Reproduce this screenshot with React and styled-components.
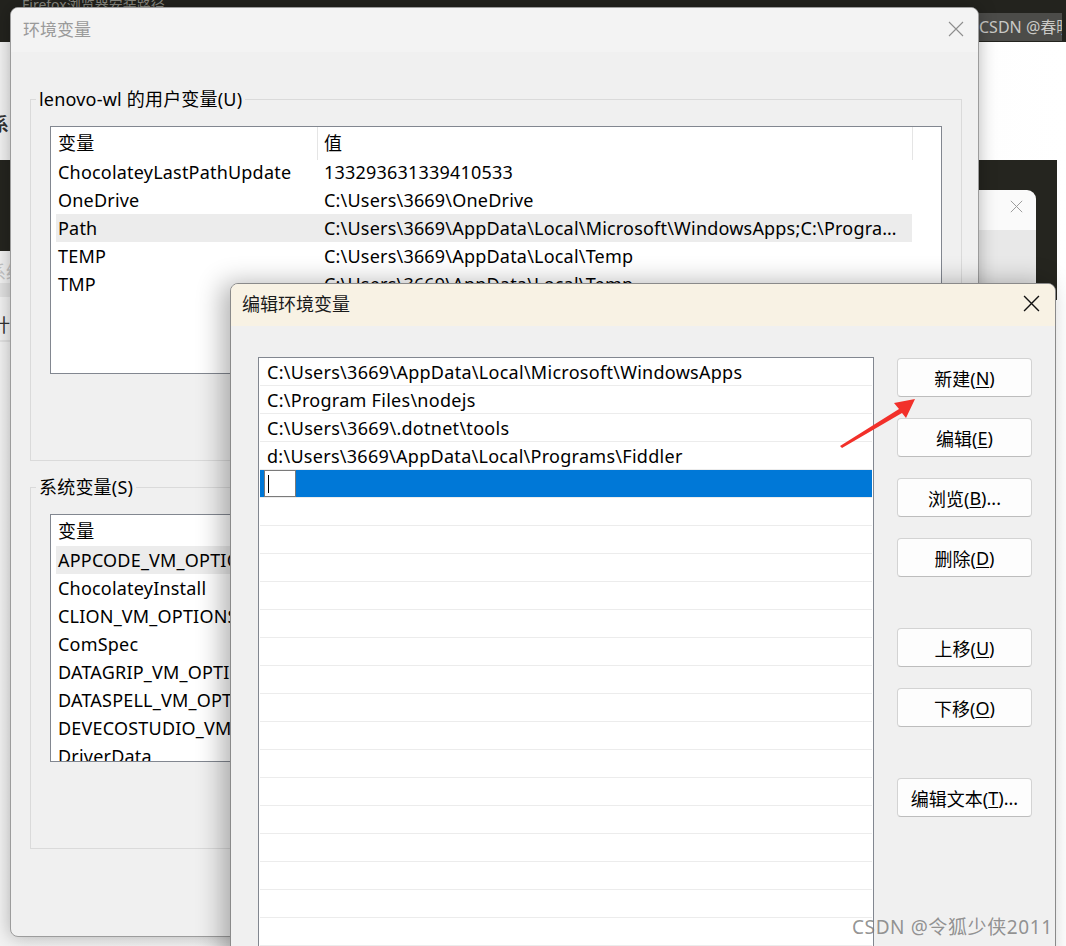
import React from "react";
import styled, { createGlobalStyle } from "styled-components";

const UI = `"Noto Sans", "Noto Sans CJK SC", sans-serif`;

const GlobalStyle = createGlobalStyle`
  html, body { margin: 0; padding: 0; }
  body { font-family: ${UI}; background: #ececec; }
  * { box-sizing: border-box; }
`;

const Screen = styled.div`
  position: relative;
  width: 1066px;
  height: 946px;
  overflow: hidden;
  background: linear-gradient(90deg, #f2f2f2 0%, #ffffff 100%);
  font-family: ${UI};
`;

/* ---------- page behind the windows ---------- */
const TopBar = styled.div`
  position: absolute;
  left: 0;
  top: 0;
  width: 100%;
  height: 42px;
  background: #23231e;
`;

const TabText = styled.div`
  position: absolute;
  left: 22px;
  top: -6px;
  font-size: 14px;
  color: #8c8c84;
`;

const CsdnTag = styled.div`
  position: absolute;
  left: 940px;
  top: 13px;
  width: 122px;
  height: 28px;
  padding-left: 39px;
  background: #4c4c49;
  color: #c9c9c6;
  font-size: 16px;
  line-height: 28px;
  white-space: nowrap;
  overflow: hidden;
`;

const DarkBand = styled.div`
  position: absolute;
  left: ${(p) => p.$left}px;
  top: ${(p) => p.$top}px;
  width: ${(p) => p.$w}px;
  height: ${(p) => p.$h}px;
  background: #25251f;
`;

const BackWindow = styled.div`
  position: absolute;
  left: 760px;
  top: 190px;
  width: 276px;
  height: 130px;
  border-radius: 0 9px 0 0;
  background: linear-gradient(180deg, #fafafa 0 40px, #e8e8e8 40px);
  display: flex;
  justify-content: flex-end;
  padding: 10px 13px 0 0;
`;

const SideText = styled.div`
  position: absolute;
  left: ${(p) => p.$left}px;
  top: ${(p) => p.$top}px;
  font-size: 18px;
  font-weight: ${(p) => (p.$bold ? 700 : 400)};
  color: ${(p) => p.$color};
  white-space: nowrap;
`;

const SideStrip = styled.div`
  position: absolute;
  left: 0;
  top: ${(p) => p.$top}px;
  width: 12px;
  height: ${(p) => p.$h}px;
  background: #e2e2e2;
`;

/* ---------- main window ---------- */
const MainWindow = styled.div`
  position: absolute;
  left: 10px;
  top: 7px;
  width: 969px;
  height: 930px;
  border: 1px solid #9c9c9c;
  border-radius: 8px;
  background: #f0f0f0;
  box-shadow: 0 0 18px rgba(0, 0, 0, 0.28);
  overflow: hidden;
  display: flex;
  flex-direction: column;
`;

const MainTitle = styled.div`
  height: 44px;
  flex: none;
  display: flex;
  align-items: center;
  justify-content: space-between;
  padding: 0 14px 3px 12px;
  background: #f3f3f3;
  color: #9a9a9a;
  font-size: 17px;
`;

const MainBody = styled.div`
  padding: 47px 16px 0 19px;
`;

const Group = styled.div`
  border: 1px solid #dadada;
  padding: 0 19px 86px 19px;
  margin-top: ${(p) => p.$top || 0}px;
`;

const GroupLabel = styled.div`
  width: fit-content;
  margin: -13px 0 0 -14px;
  padding: 0 3px;
  background: #f0f0f0;
  font-size: 18px;
  line-height: 24px;
  letter-spacing: 0.2px;
  color: #000;
`;

const VarList = styled.div`
  margin-top: 15px;
  height: 248px;
  border: 1px solid #828790;
  background: #fff;
  overflow: hidden;
  font-size: 18px;
  letter-spacing: 0.2px;
  color: #000;
`;

const VarHeader = styled.div`
  display: grid;
  grid-template-columns: 262px 595px 1fr;
  height: 31px;
  margin-left: 5px;
`;

const HeadCell = styled.div`
  padding-left: ${(p) => p.$pad}px;
  line-height: 33px;
  border-right: ${(p) => (p.$line ? "1px solid #e5e5e5" : "none")};
  white-space: nowrap;
`;

const VarRow = styled.div`
  display: grid;
  grid-template-columns: 268px 588px;
  width: 856px;
  height: 28px;
  margin-left: 5px;
  line-height: 28px;
  background: ${(p) => (p.$active ? "#ececec" : "transparent")};
  white-space: nowrap;
`;

const VarName = styled.div`
  padding-left: 2px;
  overflow: hidden;
`;

const VarValue = styled.div`
  overflow: hidden;
  text-overflow: ellipsis;
`;

/* ---------- edit dialog ---------- */
const EditDialog = styled.div`
  position: absolute;
  left: 230px;
  top: 283px;
  width: 826px;
  height: 700px;
  border: 1px solid #8a8a8a;
  border-radius: 8px 8px 0 0;
  background: #f0f0f0;
  box-shadow: -8px 0 26px rgba(0, 0, 0, 0.3);
  overflow: hidden;
`;

const DialogTitle = styled.div`
  height: 42px;
  display: flex;
  align-items: center;
  justify-content: space-between;
  padding: 0 15px 4px 11px;
  background: #f8f2e4;
  color: #1a1a1a;
  font-size: 18px;
`;

const DialogBody = styled.div`
  display: flex;
  gap: 23px;
  padding: 31px 22px 0 27px;
`;

const PathList = styled.div`
  width: 616px;
  height: 640px;
  border: 1px solid #828790;
  background: #fff;
  overflow: hidden;
`;

const PathRow = styled.div`
  height: 28px;
  display: flex;
  align-items: center;
  padding-left: ${(p) => (p.$editing ? 4 : 7)}px;
  margin: 0 1px;
  border-bottom: 1px solid #ececec;
  background: ${(p) => (p.$editing ? "#0078d7" : "#fff")};
  font-size: 18px;
  letter-spacing: 0.28px;
  color: #000;
  white-space: nowrap;
`;

const EditBox = styled.div`
  position: relative;
  width: 32px;
  height: 27px;
  background: #fff;
  border: 1px solid #7a7a7a;
  &::after {
    content: "";
    position: absolute;
    left: 3px;
    top: 4px;
    width: 1px;
    height: 18px;
    background: #000;
  }
`;

const ButtonColumn = styled.div`
  display: flex;
  flex-direction: column;
  width: 135px;
  padding-top: 1px;
`;

const DialogButton = styled.div`
  height: 39px;
  margin-top: ${(p) => p.$space}px;
  display: flex;
  align-items: center;
  justify-content: center;
  background: #fdfdfd;
  border: 1px solid #d3d3d3;
  border-bottom-color: #bdbdbd;
  border-radius: 4px;
  font-size: 18px;
  color: #000;
  u {
    text-underline-offset: 2px;
  }
`;

const Arrow = styled.svg`
  position: absolute;
  left: 0;
  top: 0;
  pointer-events: none;
`;

const Watermark = styled.div`
  position: absolute;
  left: 852px;
  top: 912px;
  font-size: 19px;
  letter-spacing: 0.6px;
  color: rgba(120, 120, 120, 0.8);
  white-space: nowrap;
`;

const CloseIcon = ({ size, color, width }) => (
  <svg width={size} height={size} viewBox="0 0 16 16">
    <path d="M1 1 L15 15 M15 1 L1 15" stroke={color} strokeWidth={width} fill="none" />
  </svg>
);

const userVars = [
  ["ChocolateyLastPathUpdate", "133293631339410533"],
  ["OneDrive", "C:\\Users\\3669\\OneDrive"],
  ["Path", "C:\\Users\\3669\\AppData\\Local\\Microsoft\\WindowsApps;C:\\Program Files\\nodejs;C:\\Users\\3669\\.dotnet\\tools"],
  ["TEMP", "C:\\Users\\3669\\AppData\\Local\\Temp"],
  ["TMP", "C:\\Users\\3669\\AppData\\Local\\Temp"],
];

const systemVars = [
  ["APPCODE_VM_OPTIONS", "C:\\jetbra\\vmoptions\\appcode.vmoptions"],
  ["ChocolateyInstall", "C:\\ProgramData\\chocolatey"],
  ["CLION_VM_OPTIONS", "C:\\jetbra\\vmoptions\\clion.vmoptions"],
  ["ComSpec", "C:\\Windows\\system32\\cmd.exe"],
  ["DATAGRIP_VM_OPTIONS", "C:\\jetbra\\vmoptions\\datagrip.vmoptions"],
  ["DATASPELL_VM_OPTIONS", "C:\\jetbra\\vmoptions\\dataspell.vmoptions"],
  ["DEVECOSTUDIO_VM_OPTIONS", "C:\\jetbra\\vmoptions\\devecostudio.vmoptions"],
  ["DriverData", "C:\\Windows\\System32\\Drivers\\DriverData"],
];

const paths = [
  "C:\\Users\\3669\\AppData\\Local\\Microsoft\\WindowsApps",
  "C:\\Program Files\\nodejs",
  "C:\\Users\\3669\\.dotnet\\tools",
  "d:\\Users\\3669\\AppData\\Local\\Programs\\Fiddler",
];

const buttons = [
  { label: "新建", key: "N", space: 0 },
  { label: "编辑", key: "E", space: 21 },
  { label: "浏览", key: "B", space: 21, dots: true },
  { label: "删除", key: "D", space: 21 },
  { label: "上移", key: "U", space: 51 },
  { label: "下移", key: "O", space: 21 },
  { label: "编辑文本", key: "T", space: 51, dots: true },
];

const VarTable = ({ rows, active, showValue }) => (
  <VarList>
    <VarHeader>
      <HeadCell $pad={2} $line>变量</HeadCell>
      <HeadCell $pad={6} $line>{showValue ? "值" : ""}</HeadCell>
      <HeadCell />
    </VarHeader>
    {rows.map(([name, value], i) => (
      <VarRow key={name} $active={i === active}>
        <VarName>{name}</VarName>
        <VarValue>{showValue ? value : ""}</VarValue>
      </VarRow>
    ))}
  </VarList>
);

export default function App() {
  const emptyRows = Array.from({ length: 18 });
  return (
    <Screen>
      <GlobalStyle />
      <TopBar />
      <TabText>Firefox浏览器安装路径</TabText>
      <CsdnTag>CSDN @春晓</CsdnTag>
      <SideText $left={-9} $top={110} $bold $color="#333">系</SideText>
      <DarkBand $left={0} $top={160} $w={20} $h={91} />
      <DarkBand $left={900} $top={160} $w={157} $h={140} />
      <BackWindow>
        <CloseIcon size={13} color="#9a9a9a" width={1.2} />
      </BackWindow>
      <SideText $left={-12} $top={258} $color="#c4c4c4">系统</SideText>
      <SideStrip $top={283} $h={14} />
      <SideText $left={-8} $top={311} $color="#333">计</SideText>
      <SideStrip $top={340} $h={2} />

      <MainWindow>
        <MainTitle>
          环境变量
          <CloseIcon size={16} color="#8e8e8e" width={1.1} />
        </MainTitle>
        <MainBody>
          <Group>
            <GroupLabel>lenovo-wl 的用户变量(U)</GroupLabel>
            <VarTable rows={userVars} active={2} showValue />
          </Group>
          <Group $top={26}>
            <GroupLabel>系统变量(S)</GroupLabel>
            <VarTable rows={systemVars} active={0} showValue />
          </Group>
        </MainBody>
      </MainWindow>

      <EditDialog>
        <DialogTitle>
          编辑环境变量
          <CloseIcon size={17} color="#111" width={1.3} />
        </DialogTitle>
        <DialogBody>
          <PathList>
            {paths.map((p) => (
              <PathRow key={p}>{p}</PathRow>
            ))}
            <PathRow $editing>
              <EditBox />
            </PathRow>
            {emptyRows.map((_, i) => (
              <PathRow key={i} />
            ))}
          </PathList>
          <ButtonColumn>
            {buttons.map((b) => (
              <DialogButton key={b.key} $space={b.space}>
                {b.label}(<u>{b.key}</u>){b.dots ? "..." : ""}
              </DialogButton>
            ))}
          </ButtonColumn>
        </DialogBody>
      </EditDialog>

      <Arrow width="1066" height="946">
        <polygon
          points="840,446 899,409 894,403 915,399 906,418 902,413 842,448"
          fill="#f2302a"
        />
      </Arrow>
      <Watermark>CSDN @令狐少侠2011</Watermark>
    </Screen>
  );
}
